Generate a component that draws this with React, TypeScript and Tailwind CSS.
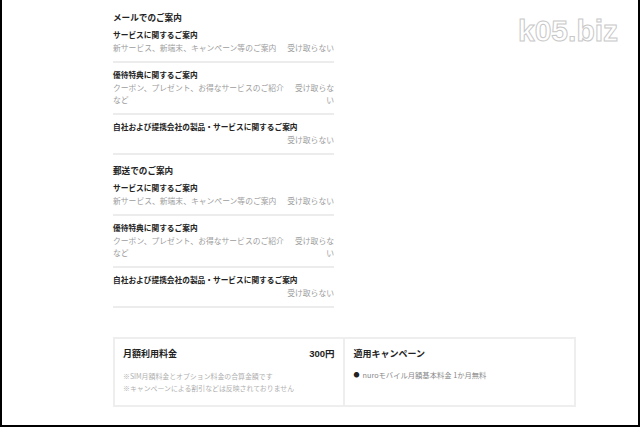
import React from "react";

const jp = { fontFamily: '"Noto Sans CJK JP", "Noto Sans", sans-serif' };

function Item({ title, desc, right }: { title: string; desc?: React.ReactNode; right: React.ReactNode }) {
  return (
    <div className="pt-[6px] pb-[7px] border-b-2 border-[#ececec]">
      <div className="text-[7.7px] leading-[12px] font-bold text-[#222]">{title}</div>
      <div className="mt-[1px] flex justify-between text-[7.8px] leading-[12px] text-[#9d9d9d]">
        <div>{desc}</div>
        <div className="text-right">{right}</div>
      </div>
    </div>
  );
}

function Section({ heading, first }: { heading: string; first?: boolean }) {
  return (
    <div className={first ? "" : "mt-[9px]"}>
      <div className="text-[8.6px] leading-[12px] font-bold text-[#222]">{heading}</div>
      <Item title="サービスに関するご案内" desc="新サービス、新端末、キャンペーン等のご案内" right="受け取らない" />
      <Item
        title="優待特典に関するご案内"
        desc={<>クーポン、プレゼント、お得なサービスのご紹介<br />など</>}
        right={<>受け取らな<br />い</>}
      />
      <Item title="自社および提携会社の製品・サービスに関するご案内" desc="" right="受け取らない" />
    </div>
  );
}

export default function App() {
  return (
    <div className="w-[640px] h-[427px] bg-white border-l-2 border-r-2 border-b-2 border-black relative overflow-hidden" style={jp}>
      <div
        className="absolute left-[516px] top-[8px] text-[30px] font-bold text-white [-webkit-text-stroke:1px_#c8c8c8]"
        style={{ fontFamily: '"Liberation Sans", Arial, sans-serif' }}
      >
        k05.biz
      </div>
      <div className="pl-[111px] pt-[11px]">
        <div className="w-[221px]">
          <Section heading="メールでのご案内" first />
          <Section heading="郵送でのご案内" />
        </div>
        <div className="mt-[29px] w-[463px] h-[70px] border-2 border-[#eeeeee] grid grid-cols-2">
          <div className="border-r-2 border-[#eeeeee] pl-[8px] pr-[8px] pt-[9px]">
            <div className="flex justify-between items-center">
              <span className="text-[9px] leading-[12px] font-bold text-[#222]">月額利用料金</span>
              <span className="text-[9.5px] leading-[12px] font-bold text-[#222]" style={{ fontFamily: '"Liberation Sans", "Noto Sans CJK JP", sans-serif' }}>300円</span>
            </div>
            <div className="mt-[10px] text-[6.9px] leading-[12px] text-[#b0b0b0]">
              <div>※SIM月額料金とオプション料金の合算金額です</div>
              <div>※キャンペーンによる割引などは反映されておりません</div>
            </div>
          </div>
          <div className="pl-[9px] pt-[9px]">
            <div className="text-[9px] leading-[12px] font-bold text-[#222]">適用キャンペーン</div>
            <div className="mt-[9px] text-[7.3px] leading-[12px] text-[#888] flex items-center gap-[3px]">
              <span className="text-[#222] text-[6px]">●</span>
              <span>nuroモバイル月額基本料金 1か月無料</span>
            </div>
          </div>
        </div>
      </div>
    </div>
  );
}
